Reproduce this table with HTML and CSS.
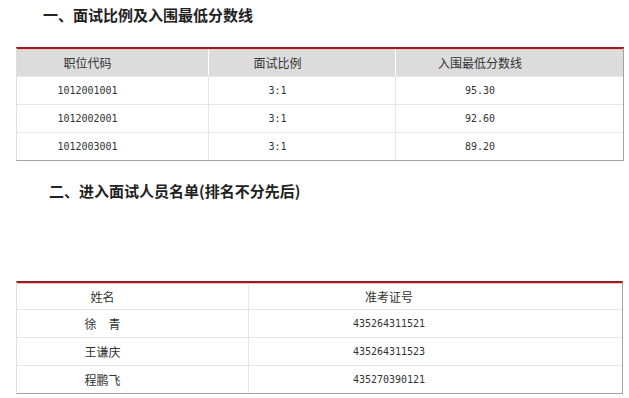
FILE: index.html
```html
<!DOCTYPE html>
<html lang="zh-CN">
<head>
<meta charset="utf-8">
<title>面试名单</title>
<link rel="stylesheet" href="styles.css">
</head>
<body>
<h2 class="sec-title sec-one">一、面试比例及入围最低分数线</h2>
<table class="data data-one">
  <colgroup><col class="c1"><col class="c2"><col class="c3"></colgroup>
  <thead>
    <tr><th class="p1">职位代码</th><th class="p2">面试比例</th><th class="p3">入围最低分数线</th></tr>
  </thead>
  <tbody>
    <tr><td class="p1 num">1012001001</td><td class="p2 num">3:1</td><td class="p3 num">95.30</td></tr>
    <tr><td class="p1 num">1012002001</td><td class="p2 num">3:1</td><td class="p3 num">92.60</td></tr>
    <tr><td class="p1 num">1012003001</td><td class="p2 num">3:1</td><td class="p3 num">89.20</td></tr>
  </tbody>
</table>
<h2 class="sec-title sec-two">二、进入面试人员名单(排名不分先后)</h2>
<table class="data data-two">
  <colgroup><col class="d1"><col class="d2"></colgroup>
  <thead>
    <tr><th class="q1">姓名</th><th class="q2">准考证号</th></tr>
  </thead>
  <tbody>
    <tr><td class="q1">徐　青</td><td class="q2 num">435264311521</td></tr>
    <tr><td class="q1">王谦庆</td><td class="q2 num">435264311523</td></tr>
    <tr><td class="q1">程鹏飞</td><td class="q2 num">435270390121</td></tr>
  </tbody>
</table>
</body>
</html>
```
FILE: styles.css
```css
html, body {
  margin: 0;
  padding: 0;
  background: #fff;
}
body {
  font-family: "Noto Sans CJK SC", "Noto Sans", sans-serif;
  font-size: 12px;
  color: #333;
}
.sec-title {
  margin: 0;
  font-size: 15px;
  font-weight: bold;
  line-height: 20px;
  color: #222;
}
.sec-one {
  padding: 5px 0 0 43px;
  margin-bottom: 22px;
}
.sec-two {
  padding-left: 49px;
  margin-top: 20px;
  margin-bottom: 80px;
}
.data {
  border-collapse: separate;
  border-spacing: 0;
  table-layout: fixed;
  margin-left: 16px;
  border-top: 2px solid #9b1c1f;
  border-left: 1px solid #dedede;
  border-right: 1px solid #a3a3a3;
  border-bottom: 1px solid #a3a3a3;
}
.data-one { width: 608px; }
.data-two { width: 607px; }
.c1 { width: 191px; }
.c2 { width: 187px; }
.c3 { width: 228px; }
.d1 { width: 231px; }
.d2 { width: 374px; }
.data th, .data td {
  box-sizing: border-box;
  padding: 0;
  text-align: center;
  font-weight: normal;
  color: #333;
  line-height: 16px;
}
.data th {
  border-top: 1px solid #f1c4c4;
}
.data-one th {
  height: 27px;
  background: #dcdcdc;
}
.data-one th + th {
  border-left: 1px solid #fff;
}
.data-two th {
  height: 26px;
  background: #fff;
}
.data-two th + th {
  border-left: 1px solid #e8e8e8;
}
.data td {
  height: 28px;
  border-top: 1px solid #e6e6e6;
}
.data td + td {
  border-left: 1px solid #e6e6e6;
}
.num {
  font-family: "DejaVu Sans Mono", "Liberation Mono", monospace;
  font-size: 10px;
}
.p1 { padding-right: 50px !important; }
.p2 { padding-right: 49px !important; }
.p3 { padding-right: 59px !important; }
.q1 { padding-right: 60px !important; }
.q2 { padding-right: 93px !important; }
```
